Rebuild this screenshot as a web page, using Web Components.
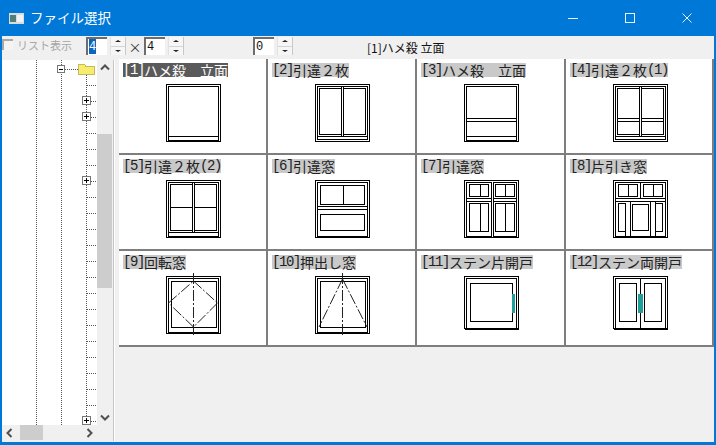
<!DOCTYPE html>
<html lang="ja">
<head>
<meta charset="utf-8">
<title>ファイル選択</title>
<style>
    html, body { margin: 0; padding: 0; background: #f0f0f0; overflow: hidden; }
</style>
</head>
<body>
<file-dialog></file-dialog>

<script>
const JP_FONT = '"Noto Sans CJK JP", "Liberation Sans", sans-serif';

class TitleBar extends HTMLElement {
    constructor() {
        super();
        this.attachShadow({ mode: "open" });
    }

    connectedCallback() {
        this.shadowRoot.innerHTML = `
            <style>
                :host {
                    display: flex;
                    align-items: center;
                    height: 36px;
                    padding-right: 1px;
                    background: #0078d7;
                    color: #fff;
                    font: 13.5px ${JP_FONT};
                }
                .icon { margin-left: 9px; width: 15px; height: 11px; }
                .text { margin-left: 6px; flex: 1; position: relative; top: -1px; }
                .btn { width: 57px; height: 36px; display: flex; align-items: center; justify-content: center; }
                .btn svg { width: 12px; height: 12px; fill: none; stroke: #eaf4fc; stroke-width: 1; }
            </style>
            <svg class="icon" viewBox="0 0 15 11">
                <rect width="15" height="11" fill="#d9dde0"/>
                <rect x="1" y="2" width="6" height="7" fill="#4f7f78"/>
                <rect x="8" y="2" width="6" height="7" fill="#f2f2f2"/>
            </svg>
            <span class="text">ファイル選択</span>
            <span class="btn"><svg viewBox="0 0 12 12"><path d="M1 6.5h10"/></svg></span>
            <span class="btn"><svg viewBox="0 0 12 12"><rect x="1.5" y="1.5" width="9" height="9"/></svg></span>
            <span class="btn"><svg viewBox="0 0 12 12"><path d="M1.5 1.5l9 9M10.5 1.5l-9 9"/></svg></span>
        `;
    }
}
customElements.define('title-bar', TitleBar);

class SpinBox extends HTMLElement {
    constructor() {
        super();
        this.attachShadow({ mode: "open" });
    }

    connectedCallback() {
        const value = this.getAttribute('value') || "0";
        const selected = this.hasAttribute('selected');
        this.shadowRoot.innerHTML = `
            <style>
                :host { display: inline-flex; height: 18px; }
                .field {
                    width: 19px;
                    height: 16px;
                    background: #fff;
                    border-top: 2px solid #6d6d6d;
                    border-left: 2px solid #6d6d6d;
                    font: 12px/16px "Liberation Mono", monospace;
                    color: #111;
                }
                .val { display: inline-block; width: 7px; height: 15px; margin-left: 1px; text-align: center; }
                .val.sel { background: #0a64c0; color: #fff; }
                .spin {
                    width: 14px;
                    margin-left: 3px;
                    display: flex;
                    flex-direction: column;
                    background: #f6f6f6;
                    border-left: 1px solid #e2e2e2;
                    border-right: 1px solid #c8c8c8;
                }
                .spin span { flex: 1; display: flex; align-items: center; justify-content: center; }
                .spin span + span { border-top: 1px solid #d4d4d4; }
                i { display: block; width: 0; height: 0; border-left: 3px solid transparent; border-right: 3px solid transparent; }
                .up { border-bottom: 2px solid #222; }
                .down { border-top: 2px solid #222; }
            </style>
            <div class="field"><span class="val ${selected ? 'sel' : ''}">${value}</span></div>
            <div class="spin"><span><i class="up"></i></span><span><i class="down"></i></span></div>
        `;
    }
}
customElements.define('spin-box', SpinBox);

class ToolBar extends HTMLElement {
    constructor() {
        super();
        this.attachShadow({ mode: "open" });
    }

    connectedCallback() {
        this.shadowRoot.innerHTML = `
            <style>
                :host {
                    display: flex;
                    align-items: flex-start;
                    height: 24px;
                    background: #f0f0f0;
                    font: 12px ${JP_FONT};
                    color: #111;
                    box-sizing: border-box;
                    padding-top: 1px;
                }
                .check { width: 9px; height: 9px; margin-top: 2px; border-top: 2px solid #a8a8a8; border-left: 2px solid #a8a8a8; background: #f4f4f4; }
                .check-text { margin-left: 4px; width: 69px; font-size: 11px; line-height: 17px; color: #a6a6a6; }
                .times { width: 18px; line-height: 20px; text-align: center; color: #333; font-size: 13px; }
                .third { margin-left: 69px; }
                .caption { margin-left: 74px; line-height: 21px; white-space: pre; }
            </style>
            <span class="check"></span>
            <span class="check-text">リスト表示</span>
            <spin-box value="4" selected></spin-box>
            <span class="times">×</span>
            <spin-box value="4"></spin-box>
            <spin-box class="third" value="0"></spin-box>
            <span class="caption">[1]ハメ殺 立面</span>
        `;
    }
}
customElements.define('tool-bar', ToolBar);

class ScrollBar extends HTMLElement {
    constructor() {
        super();
        this.attachShadow({ mode: "open" });
    }

    connectedCallback() {
        const vertical = this.getAttribute('orient') === 'v';
        const start = this.getAttribute('start');
        const size = this.getAttribute('size');
        const a = vertical ? 'M4 9.5l4-4 4 4' : 'M9.5 4l-4 4 4 4';
        const b = vertical ? 'M4 6.5l4 4 4-4' : 'M6.5 4l4 4-4 4';
        this.shadowRoot.innerHTML = `
            <style>
                :host {
                    display: flex;
                    flex-direction: ${vertical ? 'column' : 'row'};
                    background: #f0f0f0;
                }
                svg { width: 16px; height: 16px; flex: none; fill: none; stroke: #505050; stroke-width: 2; }
                .track { flex: 1; position: relative; }
                .thumb {
                    position: absolute;
                    background: #cdcdcd;
                    ${vertical ? `left: 0; width: 15px; top: ${start}px; height: ${size}px;`
                               : `top: 0; height: 15px; left: ${start}px; width: ${size}px;`}
                }
            </style>
            <svg viewBox="0 0 16 16"><path d="${a}"/></svg>
            <div class="track"><div class="thumb"></div></div>
            <svg viewBox="0 0 16 16"><path d="${b}"/></svg>
        `;
    }
}
customElements.define('scroll-bar', ScrollBar);

class FolderTree extends HTMLElement {
    constructor() {
        super();
        this.attachShadow({ mode: "open" });
    }

    connectedCallback() {
        // svg origin is at page x=2, y=60
        let dots = '';
        for (let y = 25; y <= 361; y += 16) {
            dots += `<path d="M85 ${y + .5}h10"/>`;
        }
        const plus = [41, 57, 121, 361].map(y => `
            <rect x="80.5" y="${y - 4.5}" width="8" height="8" fill="#fff" stroke="#777"/>
            <path d="M82 ${y - .5}h5M84.5 ${y - 3}v5" stroke="#000"/>
        `).join('');
        this.shadowRoot.innerHTML = `
            <style>
                :host { display: block; background: #fff; overflow: hidden; }
                svg { display: block; width: 95px; height: 365px; fill: none; shape-rendering: crispEdges; }
                .dots path { stroke: #555; stroke-dasharray: 1 1; }
            </style>
            <svg viewBox="0 0 95 365">
                <g class="dots">
                    <path d="M34.5 0v365M59.5 0v365M84.5 15v346M63 9.5h13"/>
                    ${dots}
                </g>
                ${plus}
                <rect x="55.5" y="5.5" width="7" height="7" fill="#fff" stroke="#777"/>
                <path d="M57 9.5h4" stroke="#000"/>
                <path d="M76.5 4.5h6l1 1.5h8.5v8.5h-15.500z" fill="#f8ec6c" stroke="#c8b860"/>
            </svg>
        `;
    }
}
customElements.define('folder-tree', FolderTree);

class TreePane extends HTMLElement {
    constructor() {
        super();
        this.attachShadow({ mode: "open" });
    }

    connectedCallback() {
        this.shadowRoot.innerHTML = `
            <style>
                :host {
                    display: grid;
                    grid-template-columns: 95px 16px;
                    grid-template-rows: 365px 16px;
                    flex: none;
                    background: #f0f0f0;
                    border-right: 1px solid #c6c6c6;
                    box-shadow: 1px 0 0 #fff;
                }
            </style>
            <folder-tree></folder-tree>
            <scroll-bar orient="v" start="58" size="154"></scroll-bar>
            <scroll-bar orient="h" start="2" size="23"></scroll-bar>
        `;
    }
}
customElements.define('tree-pane', TreePane);

// each drawing is listed as [x, y, w, h] boxes and [x1, y1, x2, y2] lines, from the window's top-left
const outer = [[0, 0, 54, 57], [2, 2, 50, 54]];
const stubs = [[26, 2, 26, 4], [28, 2, 28, 4], [26, 50, 26, 52], [28, 50, 28, 52]];
const DRAWINGS = {
    fix: { boxes: outer, lines: [[2, 52, 52, 52]] },
    sliding2: {
        boxes: [[0, 0, 54, 57], [2, 2, 50, 53], [4, 4, 22, 46], [28, 4, 22, 46]],
        lines: [[2, 52, 52, 52], ...stubs],
    },
    fix3: { boxes: outer, lines: [[2, 34, 52, 34], [2, 37, 52, 37], [2, 52, 52, 52]] },
    sliding4: {
        boxes: [[0, 0, 54, 57], [2, 2, 50, 53], [4, 4, 22, 46], [28, 4, 22, 46]],
        lines: [[2, 52, 52, 52], ...stubs, [4, 34, 26, 34], [28, 34, 50, 34], [4, 37, 26, 37], [28, 37, 50, 37]],
    },
    sliding5: {
        boxes: [[0, 0, 54, 57], [2, 2, 50, 54], [4, 4, 22, 46], [28, 4, 22, 46]],
        lines: [[2, 52, 52, 52], ...stubs, [4, 27, 26, 27], [28, 27, 50, 27]],
    },
    slidingTop: {
        boxes: [[0, 0, 54, 57], [2, 2, 50, 54], [5, 5, 23, 19], [28, 5, 21, 19], [5, 34, 44, 16]],
        lines: [[2, 26, 52, 26], [2, 29, 52, 29]],
    },
    panels: {
        boxes: [[0, 0, 54, 57], [2, 2, 25, 54], [29, 2, 23, 54], [5, 4, 19, 12], [31, 4, 19, 12], [5, 23, 19, 28], [31, 23, 19, 28]],
        lines: [[2, 18, 27, 18], [29, 18, 52, 18], [2, 21, 27, 21], [29, 21, 52, 21], [16, 4, 16, 16], [41, 4, 41, 16], [16, 23, 16, 51], [41, 23, 41, 51]],
    },
    single: {
        boxes: [[0, 0, 54, 57], [2, 2, 50, 54], [5, 4, 19, 12], [30, 4, 19, 12], [5, 23, 7, 28], [19, 24, 16, 26], [42, 23, 7, 28]],
        lines: [[2, 21, 52, 21], [2, 18, 52, 18], [15, 4, 15, 16], [40, 4, 40, 16], [12, 23, 12, 56], [17, 21, 17, 56], [37, 21, 37, 56], [42, 21, 42, 56], [27, 2, 27, 18]],
    },
    pivot: {
        boxes: [[0, 0, 54, 57], [2, 2, 50, 54], [5, 5, 45, 46]],
        dash: [[27.500, 5, 51.500, 27], [51.500, 27, 27.500, 51], [27.500, 51, 2.500, 27], [2.500, 27, 27.500, 5], [27.500, -3, 27.500, 60]],
    },
    projected: {
        boxes: [[0, 0, 54, 57], [2, 2, 50, 54], [5, 5, 45, 46]],
        dash: [[27.500, 3, 4, 51], [27.500, 3, 52, 51], [27.500, -3, 27.500, 60]],
    },
    door1: {
        boxes: [[0, 0, 54, 52], [2, 2, 50, 50], [6, 7, 42, 38]],
        lines: [[0, 53, 54, 53]],
        bars: [[48, 18, 3, 19]],
    },
    door2: {
        boxes: [[0, 0, 54, 52], [2, 2, 25, 50], [27, 2, 25, 50], [6, 7, 17, 38], [31, 7, 17, 38]],
        lines: [[0, 53, 54, 53]],
        bars: [[25, 18, 5, 19]],
    },
};

class ElevationIcon extends HTMLElement {
    constructor() {
        super();
        this.attachShadow({ mode: "open" });
    }

    connectedCallback() {
        const d = DRAWINGS[this.getAttribute('kind')];
        const boxes = (d.boxes || []).map(([x, y, w, h]) =>
            `<rect x="${x + .5}" y="${y + .5}" width="${w}" height="${h}"/>`).join('');
        const lines = (d.lines || []).map(([a, b, c, e]) =>
            `<path d="M${a + .5} ${b + .5}L${c + .5} ${e + .5}"/>`).join('');
        const dash = (d.dash || []).map(([a, b, c, e]) =>
            `<path class="dash" d="M${a} ${b}L${c} ${e}"/>`).join('');
        const bars = (d.bars || []).map(([x, y, w, h]) =>
            `<rect class="bar" x="${x}" y="${y}" width="${w}" height="${h}"/>`).join('');
        this.shadowRoot.innerHTML = `
            <style>
                :host { display: block; width: 55px; height: 58px; }
                svg { display: block; overflow: visible; fill: none; stroke: #000; stroke-width: 1; }
                rect, path { shape-rendering: crispEdges; }
                .dash { stroke-dasharray: 11 2 2 2; shape-rendering: auto; stroke: #222; }
                .bar { fill: #1f9f9a; stroke: none; }
            </style>
            <svg width="55" height="58" viewBox="0 0 55 58">${boxes}${lines}${dash}${bars}</svg>
        `;
    }
}
customElements.define('elevation-icon', ElevationIcon);

class WindowCell extends HTMLElement {
    constructor() {
        super();
        this.attachShadow({ mode: "open" });
    }

    connectedCallback() {
        const label = this.getAttribute('label') || "";
        // half width runs go in a narrow mono face, like the old bitmap gothic
        const html = label.replace(/[\x21-\x7e]+/g, m => `<span class="a">${m}</span>`);
        this.shadowRoot.innerHTML = `
            <style>
                :host {
                    display: block;
                    box-sizing: border-box;
                    height: 96px;
                    padding: 4px 0 0 4px;
                    background: #fff;
                    border-right: 2px solid #7e7e7e;
                    border-bottom: 2px solid #7e7e7e;
                }
                .label {
                    display: block;
                    width: max-content;
                    height: 14px;
                    font: 14px/14px ${JP_FONT};
                    color: #222;
                    background: #c9c9c9;
                    white-space: pre;
                }
                :host([selected]) .label { background: #5a5a5a; color: #fff; }
                .a {
                    display: inline-block;
                    font: 14px/14px "Liberation Mono", monospace;
                    letter-spacing: -1.4px;
                    vertical-align: top;
                }
                .pic { margin: 7px 0 0 43px; }
            </style>
            <span class="label">${html}</span>
            <div class="pic"><slot></slot></div>
        `;
    }
}
customElements.define('window-cell', WindowCell);

class FileDialog extends HTMLElement {
    constructor() {
        super();
        this.attachShadow({ mode: "open" });
    }

    connectedCallback() {
        const items = [
            ['[1]ハメ殺　立面', 'fix'], ['[2]引違２枚', 'sliding2'], ['[3]ハメ殺　立面', 'fix3'], ['[4]引違２枚(1)', 'sliding4'],
            ['[5]引違２枚(2)', 'sliding5'], ['[6]引違窓', 'slidingTop'], ['[7]引違窓', 'panels'], ['[8]片引き窓', 'single'],
            ['[9]回転窓', 'pivot'], ['[10]押出し窓', 'projected'], ['[11]ステン片開戸', 'door1'], ['[12]ステン両開戸', 'door2'],
        ];
        const cells = items.map(([label, kind], i) => `
            <window-cell label="${label}" ${i === 0 ? 'selected' : ''}><elevation-icon kind="${kind}"></elevation-icon></window-cell>
        `).join('');
        this.shadowRoot.innerHTML = `
            <style>
                :host {
                    display: block;
                    box-sizing: border-box;
                    width: 716px;
                    height: 445px;
                    background: #f0f0f0;
                    border: 0 solid #0078d7;
                    border-width: 0 2px 3px 2px;
                    overflow: hidden;
                }
                title-bar { margin: 0 -2px; }
                .main { display: flex; }
                .list {
                    margin: -1px 0 0 5px;
                    display: grid;
                    grid-template-columns: 149px 149px 149px 148px;
                    grid-auto-rows: 96px;
                    align-content: start;
                }
            </style>
            <title-bar></title-bar>
            <tool-bar></tool-bar>
            <div class="main">
                <tree-pane></tree-pane>
                <div class="list">${cells}</div>
            </div>
        `;
    }
}
customElements.define('file-dialog', FileDialog);
</script>
</body>
</html>
